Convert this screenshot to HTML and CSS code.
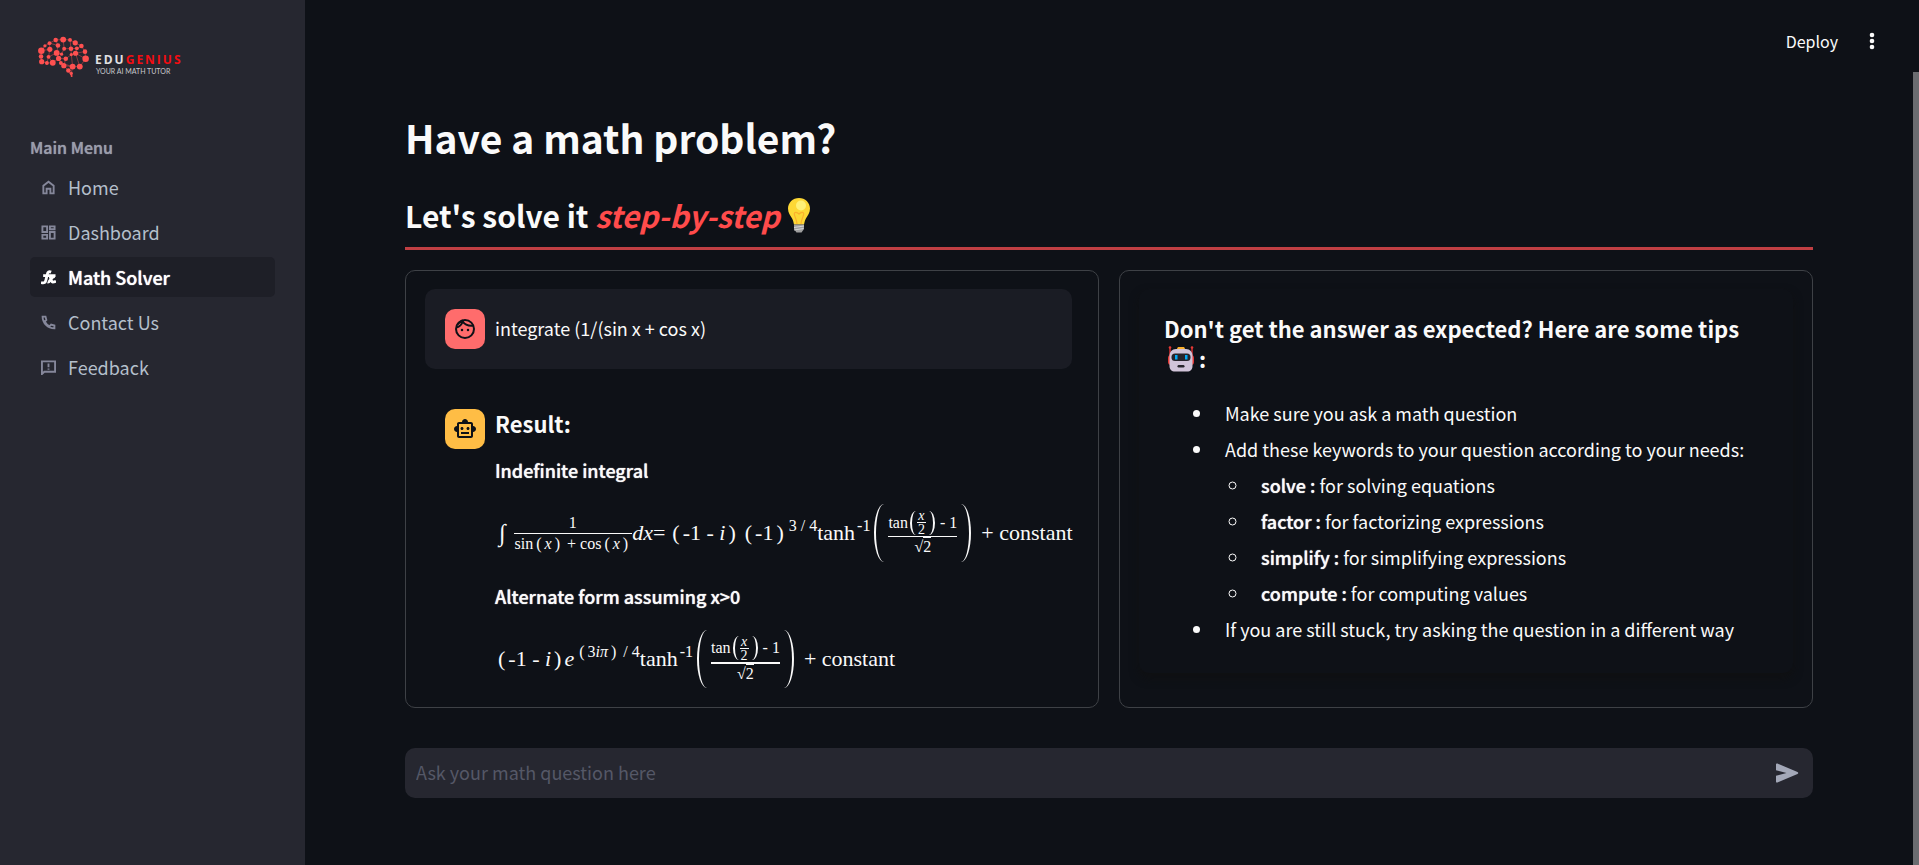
FILE: index.html
```html
<!DOCTYPE html>
<html lang="en">
<head>
<meta charset="utf-8">
<title>EduGenius - Math Solver</title>
<link rel="stylesheet" href="styles.css">
</head>
<body>
<div class="app">
  <aside class="sidebar">
    <div class="logo">
      <svg class="logo-mark" viewBox="50 48 162 129" aria-hidden="true">
        <path class="logo-lines" d="M63 93L74 78L88 70L107 60L130 59L151 60L167 69L186 79L197 96L199 118L181 142M63 93L89 89L88 70L114 77L107 60M114 77L110 100L125 104L133 87L154 87L151 60M133 87L130 59M154 87L172 86L186 79M172 86L168 101L155 105L138 118L116 117L110 100L85 112L89 89M63 93L62 111L64 127L80 131L98 130L116 117L123 131L132 139L138 118M85 112L80 131M132 139L159 142L155 105M168 101L199 118M159 142L181 142L168 101M132 139L146 154L159 142L155 163L156 172L146 154M154 87L155 105M197 96L168 101M98 130L85 112M123 131L159 142"/>
        <g class="logo-nodes">
          <circle cx="63" cy="93" r="10"/><circle cx="74" cy="78" r="5"/><circle cx="89" cy="89" r="8"/><circle cx="88" cy="70" r="6"/><circle cx="107" cy="60" r="7"/><circle cx="130" cy="59" r="9"/><circle cx="151" cy="60" r="6"/><circle cx="167" cy="69" r="8"/><circle cx="186" cy="79" r="7"/><circle cx="197" cy="96" r="7"/><circle cx="199" cy="118" r="10"/><circle cx="181" cy="142" r="9"/><circle cx="114" cy="77" r="7"/><circle cx="133" cy="87" r="6"/><circle cx="110" cy="100" r="9"/><circle cx="125" cy="104" r="5"/><circle cx="154" cy="87" r="7"/><circle cx="172" cy="86" r="6"/><circle cx="168" cy="101" r="8"/><circle cx="155" cy="105" r="5"/><circle cx="138" cy="118" r="7"/><circle cx="116" cy="117" r="8"/><circle cx="98" cy="130" r="9"/><circle cx="64" cy="127" r="8"/><circle cx="62" cy="111" r="7"/><circle cx="80" cy="131" r="6"/><circle cx="85" cy="112" r="6"/><circle cx="123" cy="131" r="6"/><circle cx="132" cy="139" r="8"/><circle cx="159" cy="142" r="9"/><circle cx="146" cy="154" r="7"/><circle cx="155" cy="163" r="5"/><circle cx="156" cy="171" r="3"/>
        </g>
      </svg>
      <div class="logo-text">
        <div class="logo-name">EDU<span class="logo-accent">GENIUS</span></div>
        <div class="logo-tag">YOUR AI MATH TUTOR</div>
      </div>
    </div>
    <div class="menu-title">Main Menu</div>
    <nav class="menu">
      <a class="menu-item" href="#">
        <svg class="menu-icon" viewBox="0 0 16 16" aria-hidden="true"><path d="M2.500 6.200L8 1.800L13.500 6.200V14.300H10V9.300H6V14.300H2.500Z"/></svg>
        <span>Home</span>
      </a>
      <a class="menu-item" href="#">
        <svg class="menu-icon" viewBox="0 0 16 16" aria-hidden="true"><path d="M1.500 1.500h5v6h-5zM9.500 1.500h5v3h-5zM9.500 7.500h5v7h-5zM1.500 10.500h5v4h-5z"/></svg>
        <span>Dashboard</span>
      </a>
      <a class="menu-item active" href="#">
        <svg class="menu-icon" viewBox="0 0 16 16" aria-hidden="true"><path d="M0 13.300C3.400 14.600 4.600 13.500 5.300 10.500L6.600 5C7.200 2 8.500 1.300 10.800 2.300M2.300 6H15.500M7 12.800C8.500 13.300 9 12 10.500 9.800S12.800 6.500 15 7M8.500 7C10.800 6.800 10.800 13 12.500 13C13.500 13 14.500 12.800 16 12"/></svg>
        <span>Math Solver</span>
      </a>
      <a class="menu-item" href="#">
        <svg class="menu-icon" viewBox="0 0 16 16" aria-hidden="true"><path d="M1.700 1.700H4.800L5.700 5.200L3.900 6.900C5 9.100 6.900 11 9.100 12.100L10.800 10.300L14.300 11.200V14.300C7.300 14.300 1.700 8.700 1.700 1.700Z"/></svg>
        <span>Contact Us</span>
      </a>
      <a class="menu-item" href="#">
        <svg class="menu-icon" viewBox="0 0 16 16" aria-hidden="true"><path d="M1 1.500H15V12.500H3.500L1 15ZM8 3.800V7.800M8 9V10.500"/></svg>
        <span>Feedback</span>
      </a>
    </nav>
  </aside>

  <div class="page">
    <header class="toolbar">
      <button class="deploy" type="button">Deploy</button>
      <button class="more" type="button" aria-label="More options">
        <svg viewBox="0 0 6 18" aria-hidden="true"><circle cx="3" cy="3" r="2.300"/><circle cx="3" cy="9" r="2.300"/><circle cx="3" cy="15" r="2.300"/></svg>
      </button>
    </header>

    <main class="content">
      <h1>Have a math problem?</h1>
      <h2>Let's solve it <em>step-by-step</em>
        <svg class="bulb" viewBox="0 0 22 35" role="img" aria-label="light bulb">
          <path fill="#fdd835" d="M11 0C4.800 0 0 4.700 0 10.500C0 14.700 2.300 17.500 4.100 20.500C5.200 22.400 5.500 24.500 6 26.500H16C16.500 24.500 16.800 22.400 17.900 20.500C19.700 17.500 22 14.700 22 10.500C22 4.700 17.200 0 11 0Z"/>
          <circle cx="13" cy="7.500" r="5" fill="#fff176"/>
          <path fill="none" stroke="#fbb02d" stroke-width="1.200" d="M9 26C8.800 21 6 18 6.300 15.500C6.600 13.700 9 14 11 16C13 14 15.400 13.700 15.700 15.500C16 18 13.200 21 13 26"/>
          <path fill="#9e9e9e" d="M6 26.500H16V31L13.500 34.500H8.500L6 31Z"/>
          <path fill="none" stroke="#d5d5d5" stroke-width="1.200" d="M6 29.500L16 28M6 32L15.500 30.500"/>
        </svg>
      </h2>
      <div class="divider"></div>

      <div class="columns">
        <section class="card chat">
          <div class="message user">
            <span class="avatar avatar-user">
              <svg viewBox="0 0 24 24" aria-hidden="true"><circle cx="12" cy="12" r="9" class="outline"/><path class="outline" d="M3.500 10.500C6.500 9.600 8.700 7.600 9.800 4.500C11.700 7.700 14.700 9.300 20.600 8.700M4.500 7.500C5.500 6.200 7 5 8.600 4.300"/><circle cx="9" cy="13" r="1.250"/><circle cx="15" cy="13" r="1.250"/></svg>
            </span>
            <p class="question">integrate (1/(sin x + cos x)</p>
          </div>
          <div class="message">
            <span class="avatar avatar-bot">
              <svg viewBox="0 0 24 24" aria-hidden="true"><path d="M20 9V7c0-1.100-.9-2-2-2h-3c0-1.660-1.340-3-3-3S9 3.340 9 5H6c-1.100 0-2 .9-2 2v2c-1.660 0-3 1.340-3 3s1.340 3 3 3v4c0 1.100.9 2 2 2h12c1.100 0 2-.9 2-2v-4c1.660 0 3-1.340 3-3s-1.340-3-3-3zm-2 10H6V7h12v12zm-9-6c-.83 0-1.500-.67-1.500-1.500S8.170 10 9 10s1.500.67 1.500 1.500S9.830 13 9 13zm7.500-1.500c0 .83-.67 1.500-1.500 1.500s-1.500-.67-1.500-1.500.67-1.500 1.500-1.500 1.500.67 1.500 1.500zM8 15h8v2H8v-2z"/></svg>
            </span>
            <div class="answer">
              <h3>Result:</h3>
              <h4>Indefinite integral</h4>
              <div class="formula integral-form">
                <span class="integral">∫</span>
                <span class="frac"><span class="num">1</span><span class="den wide">sin<span class="p">(</span><i>x</i><span class="p">)</span> + cos<span class="p">(</span><i>x</i><span class="p">)</span></span></span>
                <span class="equals"><i>dx</i>=</span>
                <span class="group"><span class="p">(</span>-1 - <i>i</i><span class="p">)</span></span>
                <span class="group factor"><span class="p">(</span>-1<span class="p">)</span></span>
                <span class="sup">3 / 4</span>
                <span>tanh</span><span class="sup">-1</span>
                <span class="paren big left"></span>
                <span class="frac"><span class="num tan">tan<span class="paren small left"></span><span class="frac inner"><span class="num"><i>x</i></span><span class="den">2</span></span><span class="paren small right"></span><span class="minus">- 1</span></span><span class="den">√<span class="root">2</span></span></span>
                <span class="paren big right"></span>
                <span class="tail">+ constant</span>
              </div>
              <h4>Alternate form assuming x&gt;0</h4>
              <div class="formula">
                <span class="group"><span class="p">(</span>-1 - <i>i</i><span class="p">)</span></span>
                <i>e</i>
                <span class="sup"><span class="p">(</span>3<i>iπ</i><span class="p">)</span> / 4</span>
                <span>tanh</span><span class="sup">-1</span>
                <span class="paren big left"></span>
                <span class="frac"><span class="num tan">tan<span class="paren small left"></span><span class="frac inner"><span class="num"><i>x</i></span><span class="den">2</span></span><span class="paren small right"></span><span class="minus">- 1</span></span><span class="den bold">√<span class="root">2</span></span></span>
                <span class="paren big right"></span>
                <span class="tail">+ constant</span>
              </div>
            </div>
          </div>
        </section>

        <section class="card tips">
          <div class="tips-box">
            <h3>Don't get the answer as expected? Here are some tips
              <svg class="robot" viewBox="0 0 26 26" role="img" aria-label="robot">
                <path fill="none" stroke="#d32f2f" stroke-width="1.500" d="M2 1V10M24 1V10"/>
                <circle cx="2" cy="1.500" r="1.300" fill="#e53935"/><circle cx="24" cy="1.500" r="1.300" fill="#e53935"/>
                <rect x="0" y="9" width="26" height="10" rx="3" fill="#e53935"/>
                <path fill="#fbb02d" d="M9 3.500C9 1.500 10 1 11 1H15C16 1 17 1.500 17 3.500Z"/>
                <path fill="#d1c4d9" d="M8 3H18C22 3 24.500 6 24.500 10V20C24.500 23.500 22.500 25.500 19 25.500H7C3.500 25.500 1.500 23.500 1.500 20V10C1.500 6 4 3 8 3Z"/>
                <rect x="3.500" y="7.500" width="19" height="7.500" rx="3.500" fill="#26242b"/>
                <rect x="7" y="9" width="2.500" height="4.500" fill="#03a9f4"/><rect x="17" y="9" width="2.500" height="4.500" fill="#03a9f4"/>
                <rect x="9.500" y="19" width="7" height="2.500" rx="1.200" fill="#26242b"/>
              </svg> :</h3>
            <ul>
              <li>Make sure you ask a math question</li>
              <li>Add these keywords to your question according to your needs:
                <ul>
                  <li><b>solve :</b> for solving equations</li>
                  <li><b>factor :</b> for factorizing expressions</li>
                  <li><b>simplify :</b> for simplifying expressions</li>
                  <li><b>compute :</b> for computing values</li>
                </ul>
              </li>
              <li>If you are still stuck, try asking the question in a different way</li>
            </ul>
          </div>
        </section>
      </div>

      <form class="ask">
        <input type="text" aria-label="Math question" placeholder="Ask your math question here">
        <button type="button" aria-label="Send">
          <svg viewBox="0 0 24 20" aria-hidden="true"><path d="M1 1.300C1 .4 1.800 .3 2.500 .6L22.500 9C23.500 9.500 23.500 10.500 22.500 11L2.500 19.400C1.800 19.700 1 19.500 1 18.700V12.700L11.500 10L1 7.300Z"/></svg>
        </button>
      </form>
    </main>
  </div>
  <div class="scroll-thumb"></div>
</div>
</body>
</html>
```
FILE: styles.css
```css
* { box-sizing: border-box; }

body {
  margin: 0;
  background: #0e1117;
  color: #fafafa;
  font-family: "Noto Sans CJK SC", "Source Sans Pro", sans-serif;
  font-size: 18px;
  line-height: 32px;
}

h1, h2, h3, h4, p, ul { margin: 0; padding: 0; }
h1, h2, h3 { font-weight: 700; }
h4, b, .menu-title, .menu-item.active { font-weight: 500; text-shadow: 0 0 1px currentColor; }
button, input { font: inherit; color: inherit; border: 0; padding: 0; background: none; }
svg { display: block; fill: currentColor; }

.app { display: flex; min-height: 100vh; }

/* Sidebar */
.sidebar { flex: 0 0 305px; padding: 36px 30px; background: #262730; }
.logo { display: flex; gap: 5px; height: 95px; padding-left: 7px; }
.logo-mark { width: 53px; height: 42px; }
.logo-lines { fill: none; stroke: #ff4b4b; stroke-width: 2; opacity: 0.7; }
.logo-nodes { fill: #ff5050; }
.logo-text { padding-top: 16px; font-family: "Open Sans", sans-serif; }
.logo-name { font-size: 12px; line-height: 15px; font-weight: 700; letter-spacing: 2px; color: #e0e0e2; }
.logo-accent { color: #f20d12; }
.logo-tag { padding-left: 1px; font-family: Lato, sans-serif; font-size: 7px; line-height: 8px; color: #c8c8cc; }
.menu-title { font-size: 16px; color: #9a9dab; }
.menu { display: flex; flex-direction: column; gap: 5px; margin-top: 4px; }
.menu-item {
  display: flex; align-items: center; gap: 12px; height: 40px; padding: 0 11px;
  border-radius: 5px; color: #b4bfcb; text-decoration: none;
}
.menu-icon { width: 15px; height: 15px; fill: none; stroke: #85879a; stroke-width: 2; }
.menu-item.active { background: #1e1f27; color: #fff; }
.menu-item.active .menu-icon { stroke: #fff; stroke-width: 3; }

/* Page */
.page { flex: 1; min-width: 0; }
.toolbar { display: flex; justify-content: flex-end; align-items: center; gap: 31px; height: 82px; padding-right: 38px; }
.deploy { font-size: 16px; }
.more svg { width: 6px; height: 18px; }
.content { padding: 27px 100px 68px; }
h1 { font-size: 39px; line-height: 56px; }
h2 { display: flex; align-items: center; margin-top: 26px; font-size: 30px; line-height: 48px; white-space: pre; }
h2 em { color: #ff4b4b; }
.bulb { width: 22px; height: 35px; margin-left: 8px; }
.divider { height: 3px; margin-top: 8px; background: #c03f43; }
.columns { display: grid; grid-template-columns: 1fr 1fr; gap: 20px; margin-top: 20px; }
.card { min-width: 0; border: 1px solid #3e4146; border-radius: 10px; }

/* Chat */
.chat { display: flex; flex-direction: column; gap: 20px; padding: 18px 26px 0 19px; }
.message { display: flex; gap: 10px; padding: 20px 20px 18px; border-radius: 10px; }
.message.user { padding-bottom: 20px; background: #1a1c24; }
.avatar { flex: 0 0 40px; display: grid; place-items: center; height: 40px; border-radius: 10px; color: #0e1117; }
.avatar svg { width: 24px; height: 24px; }
.avatar-user { background: #ff6c6c; }
.avatar-bot { background: #ffbd45; }
.outline { fill: none; stroke: currentColor; stroke-width: 2; }
.question { padding-top: 3px; }
h3 { font-size: 22px; line-height: 30px; }
.answer h3 { line-height: 28px; }
.answer h4 { margin-top: 17px; font-size: 18px; line-height: 32px; }

/* Formulas */
.formula {
  display: flex; align-items: center; height: 60px; margin-top: 17px;
  font-family: "Liberation Serif", serif; font-size: 22px; line-height: 24px; white-space: pre;
}
.integral-form { padding-left: 4px; }
.integral { margin-right: 8px; font-size: 24px; }
.equals { margin-right: 4px; }
.p { padding: 0 3px; }
.factor { margin-left: 3px; }
.frac { display: flex; flex-direction: column; align-items: center; font-size: 16px; line-height: 20px; }
.frac > .den { align-self: stretch; border-top: 1px solid; text-align: center; }
.frac > .bold { border-top-width: 2px; }
.frac > .wide { padding: 0 1px; }
.sup { align-self: flex-start; padding: 11px 0 0 2px; font-size: 16px; line-height: 24px; }
.tan { display: flex; align-items: center; }
.inner { margin: 0 1px; font-size: 14px; line-height: 13px; }
.inner > .den { padding: 0 1px; }
.minus { margin-left: 5px; }
.root { border-top: 1px solid; }
.paren { border: 0 solid; }
.paren.left { border-left-width: 2px; border-radius: 100% 0 0 100% / 50% 0 0 50%; }
.paren.right { border-right-width: 2px; border-radius: 0 100% 100% 0 / 0 50% 50% 0; }
.paren.big { width: 10px; height: 58px; margin: 0 4px; }
.paren.small { width: 6px; height: 24px; margin-left: 2px; }
.tail { margin-left: 6px; }

/* Tips */
.tips { padding: 18px 19px; }
.tips-box { padding: 24px 25px 26px; border-radius: 10px; box-shadow: 0 5px 10px rgba(16, 16, 16, 0.7); }
.tips-box h3 { padding-bottom: 22px; }
.robot { display: inline-block; width: 26px; height: 26px; margin-left: 4px; vertical-align: -4px; }
.tips-box ul { padding-left: 50px; }
.tips-box li { padding-left: 11px; line-height: 36px; }
.tips-box li ul { padding-left: 25px; }

/* Question box */
.ask { display: flex; align-items: center; height: 50px; margin-top: 40px; padding: 0 14px 0 11px; border-radius: 10px; background: #262730; }
.ask input { flex: 1; min-width: 0; height: 48px; margin-bottom: 2px; outline: 0; }
.ask input::placeholder { color: #555867; opacity: 1; }
.ask svg { width: 24px; height: 20px; color: #a3a8b8; }

.scroll-thumb { flex: 0 0 6px; margin-top: 72px; background: #6b6c70; }
```
